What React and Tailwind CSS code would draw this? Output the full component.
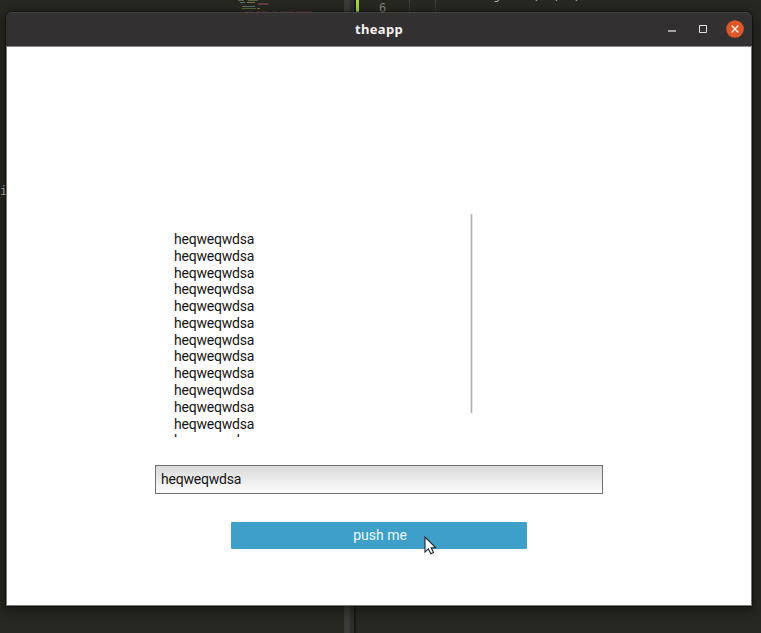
import React from "react";

const lines = Array.from({ length: 13 }, () => "heqweqwdsa");

function EditorBackdrop() {
  return (
    <div className="absolute inset-0 overflow-hidden bg-[#272822] font-['DejaVu_Sans_Mono',monospace] text-[12px]">
      <div className="absolute left-[344px] top-0 h-full w-[6px] bg-[#3a3a38]" />
      <div className="absolute left-[350px] top-0 h-full w-[4px] bg-[#2d2d2a]" />
      <div className="absolute left-[354px] top-0 h-full w-[2px] bg-[#181915]" />
      <div className="absolute left-[356px] top-0 h-[12px] w-[3px] bg-[#a2d83a]" />
      <div className="absolute left-[409px] top-0 h-[12px] border-l border-dotted border-[#4a4b44]" />
      <div className="absolute left-[435px] top-0 h-[12px] border-l border-dotted border-[#4a4b44]" />
      <span className="absolute left-[379px] top-[1px] leading-[14px] text-[#85867c]">6</span>
      <span className="absolute left-[460px] top-[-10px] whitespace-pre text-[11px] leading-[14px] tracking-[0.05px] text-[#c5c5bd]">{"     g     ,  ,  ,"}</span>
      <span className="absolute left-[0px] top-[184px] leading-[14px] text-[#b9bab4]">in</span>
      <svg className="absolute left-[238px] top-0" width="80" height="12" viewBox="0 0 80 12">
        <g opacity=".65">
          <path d="M0 .5h6M10 .5h10M4 8.5h14" stroke="#718c45" />
          <path d="M2 2.5h5M8 6.5h9" stroke="#5a9baa" />
          <path d="M9 2.5h8M4 6.5h4M19 8.5h3" stroke="#b29862" />
          <path d="M20 3.5h10M20 4.5h11M7 11.5h8M18 11.5h12M34 11.5h5M42 11.5h14M58 11.5h16" stroke="#87485a" />
        </g>
      </svg>
    </div>
  );
}

function TitleBar() {
  return (
    <header className="grid h-[35px] shrink-0 grid-cols-[1fr_auto_1fr] items-center rounded-t-[6px] border-b border-t border-b-[#89878a] border-t-[#464545] bg-[#333031] pb-[2px] pr-[8px]">
      <span />
      <h1 className="pl-[8px] font-['Noto_Sans',sans-serif] text-[13px] font-bold leading-[18px] tracking-[0.3px] text-[#f2f2f2]">theapp</h1>
      <div className="flex items-center justify-end">
        <svg width="8" height="8" viewBox="0 0 8 8" className="mr-[23px]" aria-label="Minimize">
          <path d="M0 6h8" stroke="#d8d8d8" strokeWidth="1.4" />
        </svg>
        <svg width="8" height="8" viewBox="0 0 8 8" className="mr-[19px]" aria-label="Maximize">
          <path d="M.5 .5h7v7h-7z" fill="none" stroke="#e2e2e2" />
        </svg>
        <svg width="18" height="18" viewBox="0 0 18 18" aria-label="Close">
          <circle cx="9" cy="9" r="8.8" fill="#df5729" />
          <path d="M5.6 5.6l6.8 6.8M12.4 5.6l-6.8 6.8" stroke="#fff1e9" strokeWidth="1.4" />
        </svg>
      </div>
    </header>
  );
}

export default function App() {
  return (
    <div className="relative h-[633px] w-[761px] overflow-hidden pl-[6px] pt-[12px] font-[Roboto,sans-serif]">
      <EditorBackdrop />
      <div className="relative flex h-[594px] w-[746px] flex-col rounded-t-[6px] shadow-[0_0_0_1px_#00000055,0_3px_12px_3px_#00000060]">
        <TitleBar />
        <main className="flex grow flex-col items-center border-x border-b border-[#777a75] border-t-0 bg-white pt-[167px]">
          <div className="flex h-[223px] w-[448px]">
            <div className="h-full w-[315px] overflow-hidden pl-[19px] pt-[17px]">
              {lines.map((line, i) => (
                <p key={i} className="h-[16.79px] text-[14px] leading-[16.79px] tracking-[-0.2px] text-[#151515]">{line}</p>
              ))}
            </div>
            <div className="h-[199px] w-[3px] border-x border-[#e6e6e6] bg-[#b0b0b0]" />
          </div>
          <input
            defaultValue="heqweqwdsa"
            className="mt-[28px] h-[29px] w-[448px] shrink-0 rounded-none border border-[#707070] bg-linear-to-b from-[#dadada] to-[#fcfcfc] px-[5px] pb-px text-[14px] tracking-[-0.2px] text-[#151515] outline-none"
          />
          <button className="mt-[28px] h-[27px] w-[296px] shrink-0 rounded-[1px] bg-[#3e9fc8] pl-[2px] text-[14px] leading-[27px] text-[#eef8fc]">
            push me
          </button>
        </main>
        <svg className="absolute left-[418px] top-[524px]" width="13" height="20" viewBox="0 0 13 20" aria-hidden="true">
          <path d="M1 1v15l3.4-3.1 2.4 4.8 2.7-1.2-2.3-4.7h4.6z" fill="#fff" stroke="#1c2329" strokeWidth="1.1" />
        </svg>
      </div>
    </div>
  );
}
